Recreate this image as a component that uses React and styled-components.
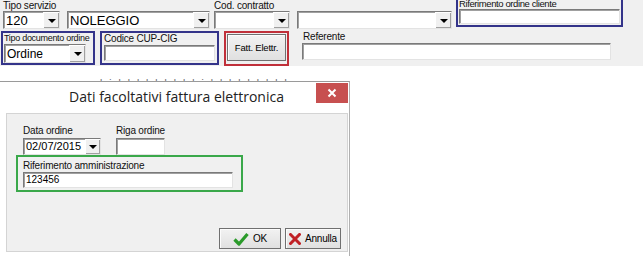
import React from 'react'
import styled, { createGlobalStyle } from 'styled-components'

const GlobalStyle = createGlobalStyle`
    body {
        margin: 0;
        background: #ffffff;
        font-family: "Liberation Sans", Arial, sans-serif;
    }
`

const Page = styled.div`
    width: 643px;
    height: 256px;
    overflow: hidden;
    background: #ffffff;
`

const Form = styled.div`
    height: 66px;
    background: #f0f0f0;
    display: flex;
    flex-direction: column;
`

const Row = styled.div`
    display: flex;
    align-items: flex-start;
    height: ${p => p.h}px;
    padding-left: ${p => p.pl || 0}px;
    gap: ${p => p.gap || 0}px;
`

const Field = styled.div`
    display: flex;
    flex-direction: column;
    margin-left: ${p => p.ml || 0}px;
    margin-top: ${p => p.mt || 0}px;
`

const Label = styled.div`
    font-size: ${p => p.size || 10}px;
    line-height: ${p => p.lh || 11}px;
    height: ${p => p.lh || 11}px;
    color: #111;
    letter-spacing: ${p => p.ls || -0.2}px;
    white-space: nowrap;
    padding-left: ${p => p.pl || 0}px;
`

const Controls = styled.div`
    display: flex;
    gap: ${p => p.gap || 0}px;
`

const Box = styled.div`
    box-sizing: border-box;
    width: ${p => p.w}px;
    height: ${p => p.h}px;
    border-top: 1px solid #7a7a7a;
    border-left: 1px solid #7a7a7a;
    border-right: 1px solid #e3e3e3;
    border-bottom: 1px solid #e3e3e3;
    box-shadow: inset 1px 1px 0 #a0a0a0;
    background: #ffffff;
    display: flex;
    align-items: center;
    font-size: ${p => p.fs || 12}px;
    color: #000;
    padding-left: 2px;
    overflow: hidden;
`

const BoxText = styled.span`
    flex: 1;
    white-space: nowrap;
    line-height: 1;
`

const DropBtn = styled.div`
    box-sizing: border-box;
    width: ${p => p.w || 16}px;
    height: 100%;
    background: #f0f0f0;
    border-left: 1px solid #ffffff;
    border-top: 1px solid #ffffff;
    box-shadow: inset -1px -1px 0 #a0a0a0;
    display: flex;
    align-items: center;
    justify-content: center;

    &::after {
        content: '';
        border-left: 4px solid transparent;
        border-right: 4px solid transparent;
        border-top: 4px solid #000;
    }
`

const Frame = styled.div`
    box-sizing: border-box;
    width: ${p => p.w}px;
    height: ${p => p.h}px;
    border: ${p => p.bw || 2}px solid ${p => p.color};
    padding: ${p => p.pad || '0 0 0 1px'};
    margin-top: ${p => p.mt || 0}px;
    display: flex;
    flex-direction: column;
    align-items: flex-start;
`

const WinButton = styled.div`
    box-sizing: border-box;
    width: ${p => p.w}px;
    height: ${p => p.h}px;
    border: 1px solid #707070;
    background: linear-gradient(#f2f2f2, #e0e0e0);
    box-shadow: inset 1px 1px 0 #fcfcfc;
    display: flex;
    align-items: center;
    justify-content: center;
    gap: 4px;
    font-size: ${p => p.fs || 10}px;
    letter-spacing: -0.2px;
    color: #000;
`

const Clipped = styled.div`
    height: 15px;
    position: relative;
`

const Hidden = styled.div`
    position: absolute;
    left: 100px;
    top: 10px;
    height: 5px;
    overflow: hidden;
    font-size: 10px;
    line-height: 16px;
    color: #666;
    letter-spacing: 7px;
    white-space: nowrap;
`

const Dialog = styled.div`
    box-sizing: border-box;
    width: 350px;
    height: 176px;
    border-top: 1px solid #9a9a9a;
    border-right: 1px solid #b0b0b0;
    background: #ffffff;
    display: flex;
    flex-direction: column;
`

const TitleBar = styled.div`
    height: 30px;
    display: flex;
    align-items: flex-start;
    position: relative;
`

const Title = styled.div`
    flex: 1;
    text-align: center;
    font-family: "Open Sans", "Noto Sans", sans-serif;
    font-size: 14px;
    line-height: 30px;
    color: #222;
    padding-left: 4px;
`

const CloseBtn = styled.div`
    position: absolute;
    right: 1px;
    top: 1px;
    width: 32px;
    height: 20px;
    background: #c75050;
    display: flex;
    align-items: center;
    justify-content: center;
`

const Panel = styled.div`
    box-sizing: border-box;
    margin-left: 6px;
    margin-top: 1px;
    width: 342px;
    height: 139px;
    background: #f0f0f0;
    border: 1px solid #d4d4d4;
    display: flex;
    flex-direction: column;
    padding: 10px 6px 0 15px;
`

const ButtonBar = styled.div`
    display: flex;
    justify-content: flex-end;
    gap: 4px;
    margin-top: 36px;
`

const CheckIcon = () => (
    <svg width="16" height="14" viewBox="0 0 16 14">
        <path d="M1.5 7.5 L6 12 L14.5 2" fill="none" stroke="#2a9a2a" strokeWidth="3.2" strokeLinejoin="round" />
    </svg>
)

const CrossIcon = () => (
    <svg width="12" height="12" viewBox="0 0 12 12">
        <path d="M1.5 1.5 L10.5 10.5 M10.5 1.5 L1.5 10.5" stroke="#c02025" strokeWidth="3" strokeLinecap="square" />
    </svg>
)

const CloseIcon = () => (
    <svg width="10" height="10" viewBox="0 0 10 10">
        <path d="M1.5 1.5 L8.5 8.5 M8.5 1.5 L1.5 8.5" stroke="#ffffff" strokeWidth="2" />
    </svg>
)

const Combo = ({ w, text, fs }) => (
    <Box w={w} h={18} fs={fs}>
        <BoxText>{text}</BoxText>
        <DropBtn />
    </Box>
)

export default function App() {
    return (
        <Page>
            <GlobalStyle />
            <Form>
                <Row h={31} pl={3}>
                    <Field>
                        <Label lh={11}>Tipo servizio</Label>
                        <Controls gap={7}>
                            <Combo w={57} text="120" fs={13} />
                            <Combo w={143} text="NOLEGGIO" fs={13} />
                        </Controls>
                    </Field>
                    <Field ml={4}>
                        <Label lh={11}>Cod. contratto</Label>
                        <Combo w={76} text="" />
                    </Field>
                    <Field ml={7}>
                        <Label lh={11}></Label>
                        <Combo w={155} text="" />
                    </Field>
                    <Frame w={167} h={30} color="#34348a" mt={-3} pad="0 0 0 1px" style={{ marginLeft: 4 }}>
                        <Label lh={10} size={9.5} ls={-0.4}>Riferimento ordine cliente</Label>
                        <Box w={161} h={15} />
                    </Frame>
                </Row>
                <Row h={35} pl={1} gap={5}>
                    <Frame w={94} h={34} color="#34348a">
                        <Label lh={10} size={9} ls={-0.3}>Tipo documento ordine</Label>
                        <Box w={82} h={19} fs={12} style={{ marginTop: 1 }}>
                            <BoxText>Ordine</BoxText>
                            <DropBtn />
                        </Box>
                    </Frame>
                    <Frame w={119} h={34} color="#34348a" pad="0 0 0 2px">
                        <Label lh={11}>Codice CUP-CIG</Label>
                        <Box w={111} h={16} style={{ marginTop: 1 }} />
                    </Frame>
                    <Frame w={65} h={35} color="#c0303a" pad="1px">
                        <WinButton w={59} h={27} fs={9.5}>Fatt. Elettr.</WinButton>
                    </Frame>
                    <Field ml={8}>
                        <Label lh={12} pl={1}>Referente</Label>
                        <Box w={309} h={17} />
                    </Field>
                </Row>
            </Form>
            <Clipped>
                <Hidden>lilllllllllilllllllll</Hidden>
            </Clipped>
            <Dialog>
                <TitleBar>
                    <Title>Dati facoltativi fattura elettronica</Title>
                    <CloseBtn><CloseIcon /></CloseBtn>
                </TitleBar>
                <Panel>
                    <Row h={31} gap={15} style={{ paddingLeft: 1 }}>
                        <Field>
                            <Label lh={14}>Data ordine</Label>
                            <Box w={78} h={17} fs={11}>
                                <BoxText>02/07/2015</BoxText>
                                <DropBtn w={15} />
                            </Box>
                        </Field>
                        <Field>
                            <Label lh={14}>Riga ordine</Label>
                            <Box w={49} h={17} />
                        </Field>
                    </Row>
                    <Frame w={227} h={37} color="#3aa84a" pad="2px 0 0 5px" style={{ marginLeft: -6 }}>
                        <Label lh={13}>Riferimento amministrazione</Label>
                        <Box w={210} h={16} fs={10}>
                            <BoxText>123456</BoxText>
                        </Box>
                    </Frame>
                    <ButtonBar>
                        <WinButton w={62} h={21}><CheckIcon />OK</WinButton>
                        <WinButton w={56} h={21}><CrossIcon />Annulla</WinButton>
                    </ButtonBar>
                </Panel>
            </Dialog>
        </Page>
    )
}
